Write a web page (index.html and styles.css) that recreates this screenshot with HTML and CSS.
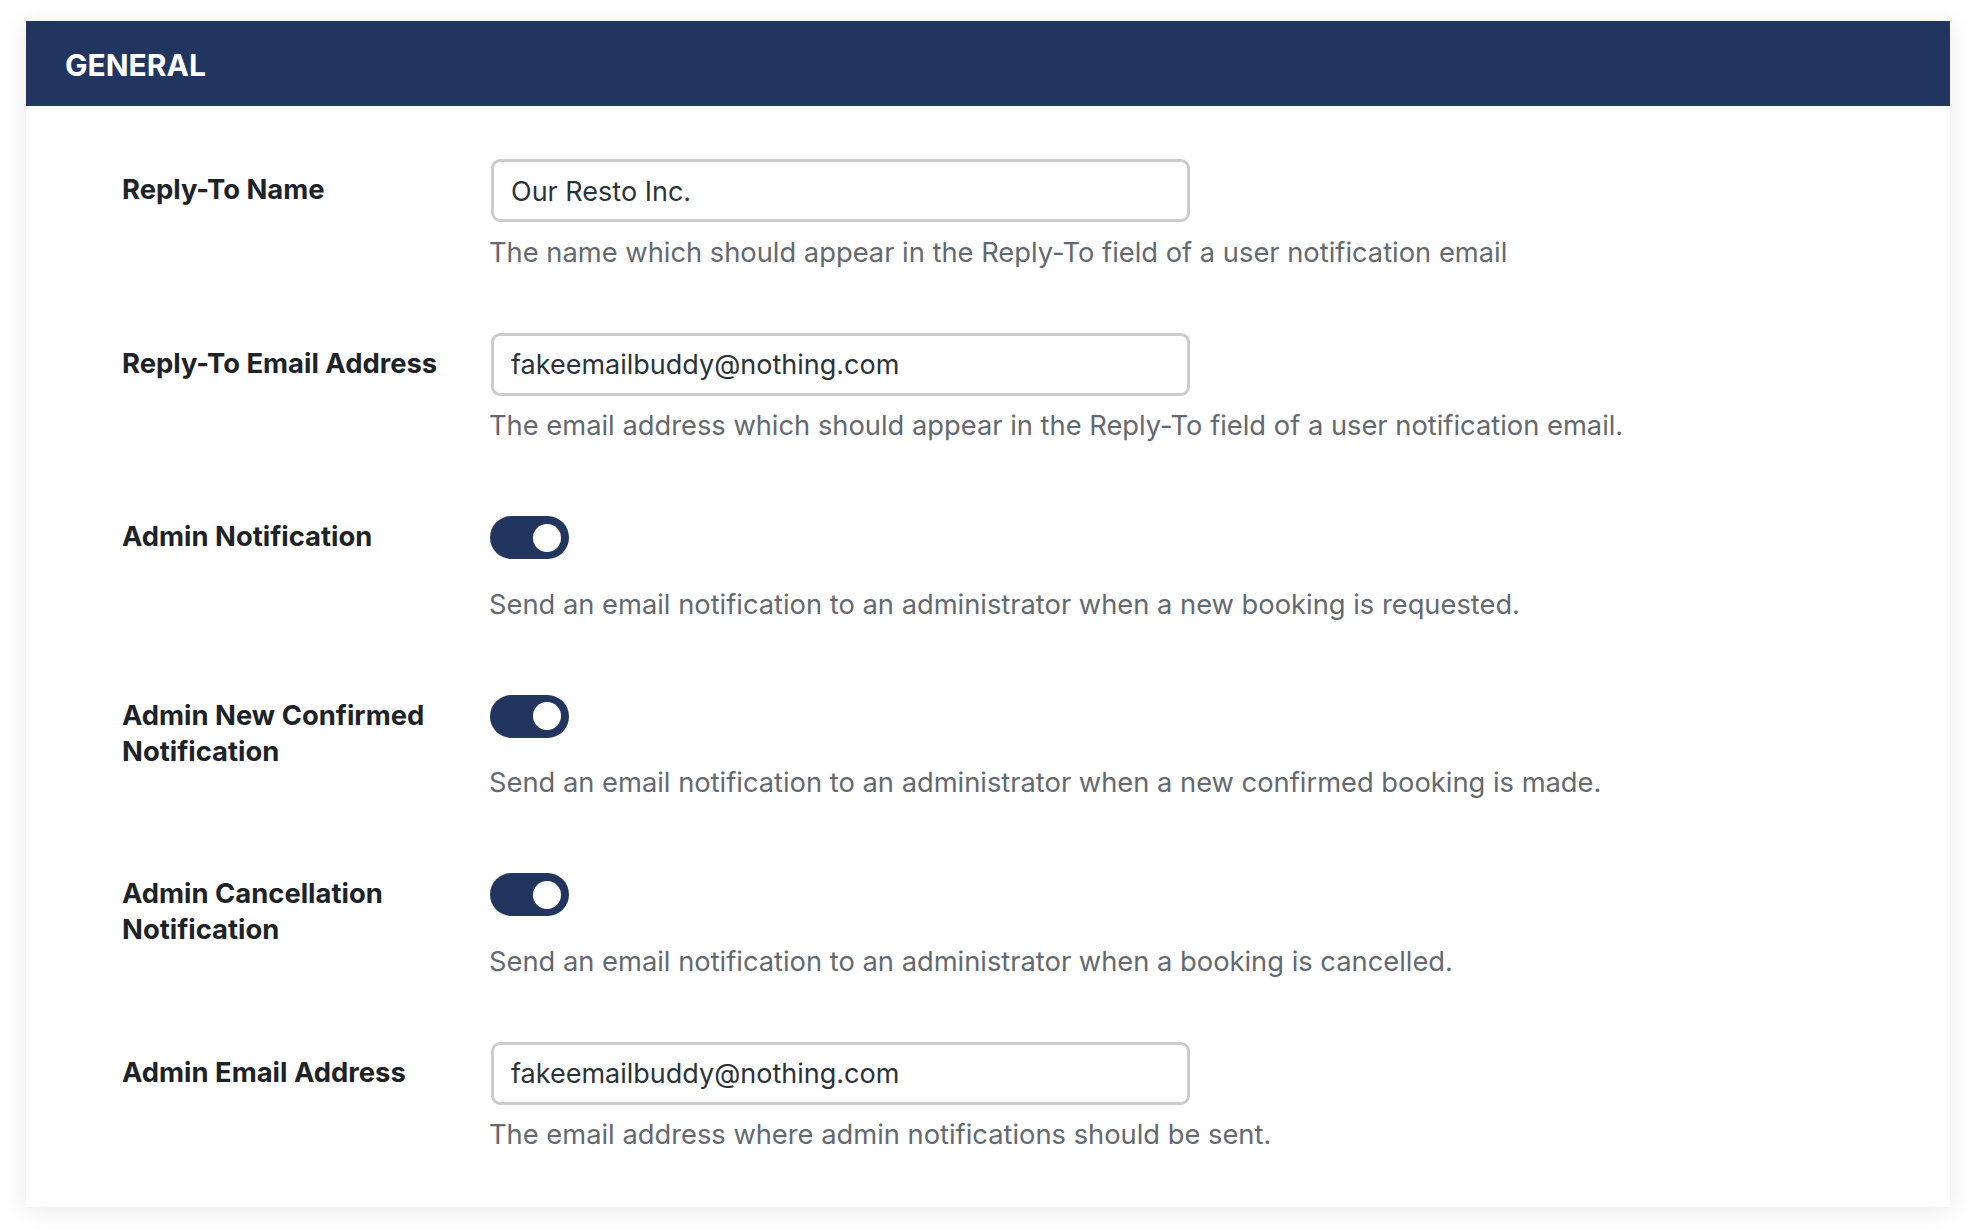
FILE: index.html
```html
<!DOCTYPE html>
<html lang="en">
<head>
<meta charset="utf-8">
<title>General settings</title>
<link rel="stylesheet" href="styles.css">
</head>
<body>
<section class="card">
  <header class="card-head"><h2 class="card-title">GENERAL</h2></header>
  <div class="card-body">
    <div class="row">
      <div class="label">Reply-To Name</div>
      <div class="field">
        <div class="input">Our Resto Inc.</div>
        <p class="desc">The name which should appear in the Reply-To field of a user notification email</p>
      </div>
    </div>
    <div class="row">
      <div class="label">Reply-To Email Address</div>
      <div class="field">
        <div class="input">fakeemailbuddy@nothing.com</div>
        <p class="desc">The email address which should appear in the Reply-To field of a user notification email.</p>
      </div>
    </div>
    <div class="row">
      <div class="label">Admin Notification</div>
      <div class="field">
        <div class="toggle-wrap"><span class="toggle"><span class="knob"></span></span></div>
        <p class="desc">Send an email notification to an administrator when a new booking is requested.</p>
      </div>
    </div>
    <div class="row">
      <div class="label">Admin New Confirmed Notification</div>
      <div class="field">
        <div class="toggle-wrap"><span class="toggle"><span class="knob"></span></span></div>
        <p class="desc">Send an email notification to an administrator when a new confirmed booking is made.</p>
      </div>
    </div>
    <div class="row">
      <div class="label">Admin Cancellation Notification</div>
      <div class="field">
        <div class="toggle-wrap"><span class="toggle"><span class="knob"></span></span></div>
        <p class="desc">Send an email notification to an administrator when a booking is cancelled.</p>
      </div>
    </div>
    <div class="row">
      <div class="label">Admin Email Address</div>
      <div class="field">
        <div class="input">fakeemailbuddy@nothing.com</div>
        <p class="desc">The email address where admin notifications should be sent.</p>
      </div>
    </div>
  </div>
</section>
</body>
</html>
```

FILE: styles.css
```css
html, body {
  margin: 0;
  padding: 0;
  background: #ffffff;
}
body {
  padding: 21px 24px 24px 26px;
  font-family: Inter, "Liberation Sans", Arial, sans-serif;
}
.card {
  background: #ffffff;
  box-shadow: 0 4px 22px rgba(0, 0, 0, 0.09);
}
.card-head {
  background: #21355e;
  height: 85px;
  display: flex;
  align-items: center;
  padding-left: 39px;
}
.card-title {
  margin: 0;
  color: #ffffff;
  font-size: 30px;
  font-weight: 700;
  letter-spacing: 0;
  line-height: 1;
  padding-top: 2px;
}
.card-body {
  padding: 53px 40px 54px 96px;
  display: flex;
  flex-direction: column;
  gap: 62px;
}
.row {
  display: grid;
  grid-template-columns: 368px 1fr;
}
.label {
  padding-top: 12px;
  padding-right: 20px;
  font-size: 27.4px;
  line-height: 36px;
  font-weight: 700;
  color: #1d2327;
}
.field {
  display: flex;
  flex-direction: column;
  align-items: flex-start;
}
.input {
  box-sizing: border-box;
  width: 699px;
  height: 63px;
  margin-left: 1px;
  border: 3px solid #cccccc;
  border-radius: 9px;
  padding: 1px 17px 0;
  display: flex;
  align-items: center;
  font-size: 27px;
  color: #2c3338;
}
.desc {
  margin: 12.5px 0 0 -1px;
  font-size: 27.3px;
  line-height: 36px;
  color: #646970;
}
.toggle-wrap {
  height: 68px;
  padding-top: 10px;
  box-sizing: border-box;
}
.toggle {
  display: flex;
  justify-content: flex-end;
  align-items: center;
  box-sizing: border-box;
  width: 79px;
  height: 43px;
  padding-right: 8px;
  border-radius: 22px;
  background: #21355e;
}
.knob {
  width: 28px;
  height: 28px;
  border-radius: 50%;
  background: #ffffff;
}
```
